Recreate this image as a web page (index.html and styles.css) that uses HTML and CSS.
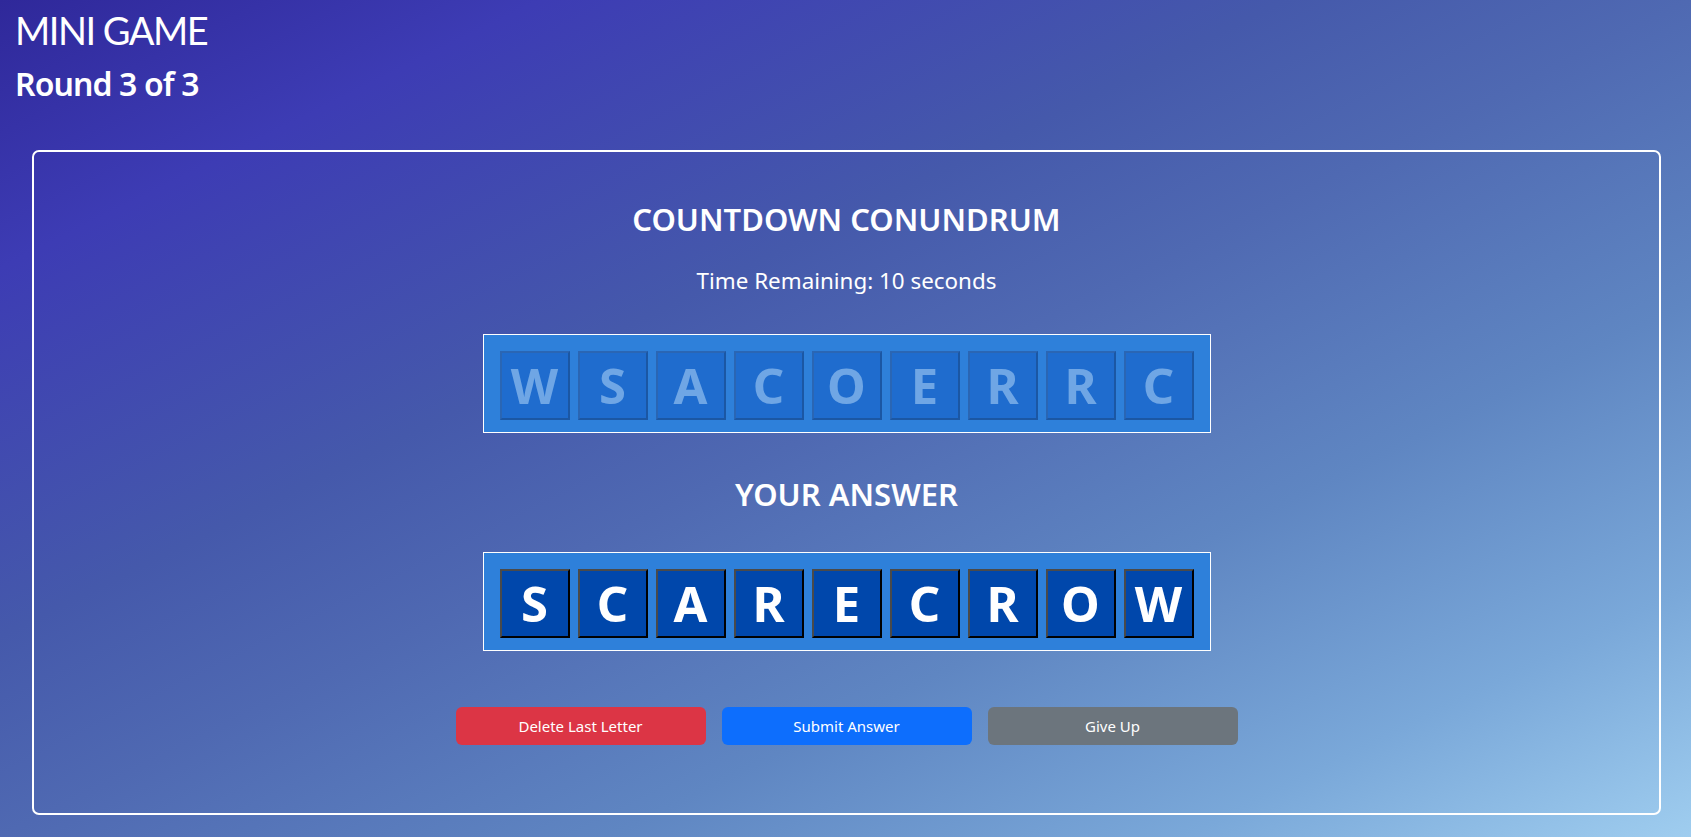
FILE: index.html
```html
<!DOCTYPE html>
<html lang="en">
<head>
<meta charset="utf-8">
<title>Mini Game</title>
<link rel="stylesheet" href="styles.css">
</head>
<body>
<div class="page">
  <header class="header">
    <h1 class="game-title">MINI GAME</h1>
    <h2 class="round">Round 3 of 3</h2>
  </header>
  <main class="card">
    <h3 class="heading heading-top">COUNTDOWN CONUNDRUM</h3>
    <p class="timer">Time Remaining: 10 seconds</p>
    <div class="tray">
      <span class="tile used">W</span>
      <span class="tile used">S</span>
      <span class="tile used">A</span>
      <span class="tile used">C</span>
      <span class="tile used">O</span>
      <span class="tile used">E</span>
      <span class="tile used">R</span>
      <span class="tile used">R</span>
      <span class="tile used">C</span>
    </div>
    <h3 class="heading heading-answer">YOUR ANSWER</h3>
    <div class="tray answer">
      <span class="tile">S</span>
      <span class="tile">C</span>
      <span class="tile">A</span>
      <span class="tile">R</span>
      <span class="tile">E</span>
      <span class="tile">C</span>
      <span class="tile">R</span>
      <span class="tile">O</span>
      <span class="tile">W</span>
    </div>
    <div class="actions">
      <button class="btn btn-danger" type="button">Delete Last Letter</button>
      <button class="btn btn-primary" type="button">Submit Answer</button>
      <button class="btn btn-secondary" type="button">Give Up</button>
    </div>
  </main>
</div>
</body>
</html>
```

FILE: styles.css
```css
* { box-sizing: border-box; }

html, body {
  margin: 0;
  height: 100%;
}

body {
  font-family: "Noto Sans", "Open Sans", sans-serif;
  color: #fff;
  background: linear-gradient(to bottom right, #2f289a 0%, #3d3cb4 16%, #4559ab 38%, #4f69b2 50%, #5f86c2 68%, #7aa8d9 85%, #9fcdef 100%);
  overflow: hidden;
}

.page {
  display: flex;
  flex-direction: column;
  height: 100%;
  padding: 0 30px 22px 32px;
}

.header {
  margin-left: -17px;
  padding-top: 8px;
  height: 150px;
}

.game-title {
  margin: 0;
  font-family: "Lato", sans-serif;
  font-weight: 400;
  font-size: 38px;
  line-height: 44px;
  letter-spacing: -1.5px;
}

.round {
  margin: 12px 0 0;
  font-weight: 600;
  font-size: 32px;
  line-height: 40px;
  letter-spacing: -0.9px;
}

.card {
  flex: 1;
  border: 2px solid #fff;
  border-radius: 7px;
  display: flex;
  flex-direction: column;
  align-items: center;
  padding-top: 47px;
}

.heading {
  margin: 0;
  font-weight: 600;
  font-size: 31px;
  line-height: 40px;
}

.timer {
  margin: 27px 0 0;
  font-size: 22.4px;
  line-height: 30px;
}

.tray {
  margin-top: 38px;
  display: flex;
  gap: 8px;
  padding: 16px 16px 12px;
  border: 1px solid #fff;
  background: #2e80da;
}

.heading-answer {
  margin-top: 41px;
}

.tray.answer {
  margin-top: 38px;
}

.tile {
  width: 70px;
  height: 69px;
  display: flex;
  align-items: center;
  justify-content: center;
  font-weight: 700;
  font-size: 49px;
  line-height: 1;
  background: #0047ab;
  color: #fff;
  border: 2px solid;
  border-color: #4a4a4a #000 #000 #4a4a4a;
}

.tile.used {
  background: #1f6cce;
  color: #6fa6e5;
  border-color: #2a66b4 #1b57a4 #1b57a4 #2a66b4;
}

.actions {
  margin-top: 56px;
  display: flex;
  gap: 16px;
}

.btn {
  width: 250px;
  height: 38px;
  border: 0;
  border-radius: 6px;
  font-family: "Noto Sans", sans-serif;
  font-size: 15px;
  color: #fff;
  cursor: pointer;
}

.btn-danger { background: #dc3545; }
.btn-primary { background: #0d6efd; }
.btn-secondary { background: #6c757d; }
```
